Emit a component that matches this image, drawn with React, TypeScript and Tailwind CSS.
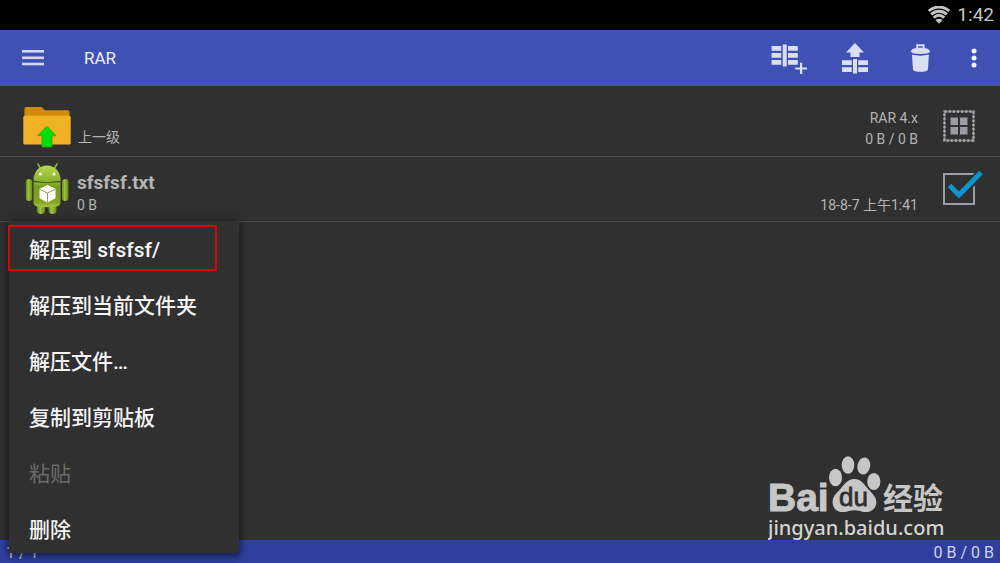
import { useState } from "react";

type MenuEntry = {
  label: string;
  disabled?: boolean;
};

const menuEntries: MenuEntry[] = [
  { label: "解压到 sfsfsf/" },
  { label: "解压到当前文件夹" },
  { label: "解压文件…" },
  { label: "复制到剪贴板" },
  { label: "粘贴", disabled: true },
  { label: "删除" },
];

function WifiIcon() {
  return (
    <svg width="24" height="18" viewBox="0 0 24 18" fill="none" stroke="#c4c4c4">
      <path d="M1.800 5C7.500 -.2 16.500 -.2 22.200 5" strokeWidth="3" />
      <path d="M4.200 8.300C8.800 4.200 15.200 4.200 19.800 8.300" strokeWidth="3" />
      <path d="M6.800 11.600C10 8.700 14 8.700 17.200 11.600" strokeWidth="3" />
      <path d="M12 17.800L8.400 13.900C10.600 12.200 13.400 12.200 15.600 13.900Z" fill="#c4c4c4" stroke="none" />
    </svg>
  );
}

function MenuIcon() {
  return (
    <svg width="22" height="18" viewBox="0 0 22 18" fill="#d5d9f0">
      <rect y="1" width="22" height="2.600" />
      <rect y="7.500" width="22" height="2.600" />
      <rect y="13.700" width="22" height="2.600" />
    </svg>
  );
}

function AddArchiveIcon() {
  return (
    <svg width="36" height="32" viewBox="0 0 36 32" fill="#dadef2">
      <path d="M.6 4h9.600v4.800H.6zM.6 11h9.600v4.800H.6zM.6 18h9.600v4.800H.6z" />
      <path d="M17 4h9.800v4.800H17zM17 11h9.800v4.800H17zM17 18h9.800v4.800H17z" />
      <path d="M11.700 2.500h4v22h-4z" />
      <path d="M29 20.800h2.200v4.700H36v2h-4.800v4.500H29v-4.500h-4.800v-2H29z" />
    </svg>
  );
}

function ExtractIcon() {
  return (
    <svg width="32" height="32" viewBox="0 0 32 32" fill="#dadef2">
      <path d="M16 1l9 9.500h-4.500V15h-9v-4.500H7z" />
      <path d="M3 18.300h9.800V23H3zM3 25.300h9.800V30H3z" />
      <path d="M19.200 18.300H29V23h-9.800zM19.200 25.300H29V30h-9.800z" />
      <path d="M14 17h4v14.500h-4z" />
    </svg>
  );
}

function TrashIcon() {
  return (
    <svg width="36" height="32" viewBox="0 0 36 32" fill="#dadef2">
      <path d="M13.200 7V2.300h8.400V7h-1.900V4.200h-4.600V7z" />
      <path d="M7.800 9.800C8.200 7 11.500 5.800 17.400 5.800S26.600 7 27 9.800C26 11.200 22.500 12 17.400 12S8.800 11.200 7.800 9.800z" />
      <path d="M9 12.600C14 14 20.800 14 25.900 12.600L25 27.200C24.500 29.200 21.500 29.700 17.400 29.700S10.300 29.200 9.900 27.200z" />
    </svg>
  );
}

function MoreIcon() {
  return (
    <svg width="6" height="32" viewBox="0 0 6 32" fill="#f5f6ff">
      <circle cx="3" cy="9" r="2.500" />
      <circle cx="3" cy="16" r="2.500" />
      <circle cx="3" cy="23" r="2.500" />
    </svg>
  );
}

function FolderUpIcon() {
  return (
    <svg width="48" height="42" viewBox="0 0 48 42">
      <path d="M1.500 12V2.500Q1.500 1 3 1H18.500L22 4.300H45Q46.500 4.300 46.500 6V12z" fill="#d08c06" />
      <rect x=".3" y="9.800" width="47.400" height="28.600" rx="1.500" fill="#f0b126" />
      <path
        d="M24 20.200L33 29.700H29V41H19V29.700H14.800z"
        fill="#00dd0c"
        stroke="#2fa300"
        strokeWidth=".8"
      />
    </svg>
  );
}

function AndroidIcon() {
  return (
    <svg width="44" height="52" viewBox="0 0 44 52">
      <defs>
        <linearGradient id="body" x1="0" y1="0" x2="0" y2="1">
          <stop offset="0" stopColor="#8fb52f" />
          <stop offset=".2" stopColor="#759a1e" />
          <stop offset=".8" stopColor="#82a527" />
          <stop offset="1" stopColor="#a4c842" />
        </linearGradient>
        <linearGradient id="head" x1="0" y1="0" x2="0" y2="1">
          <stop offset="0" stopColor="#b5d84f" />
          <stop offset="1" stopColor="#86b02b" />
        </linearGradient>
        <linearGradient id="limb" x1="0" y1="0" x2="1" y2="0">
          <stop offset="0" stopColor="#63821a" />
          <stop offset=".4" stopColor="#9dc43a" />
          <stop offset="1" stopColor="#6a8a1c" />
        </linearGradient>
      </defs>
      <path d="M13 1l3.500 6M32 1l-3.500 6" stroke="#96bb36" strokeWidth="1.500" strokeLinecap="round" />
      <rect x="12" y="38" width="8" height="13" rx="4" fill="url(#limb)" />
      <rect x="23.500" y="38" width="8" height="13" rx="4" fill="url(#limb)" />
      <rect x=".8" y="16" width="6.400" height="22" rx="3.200" fill="url(#limb)" />
      <rect x="37" y="16" width="6.400" height="22" rx="3.200" fill="url(#limb)" />
      <path d="M8.500 19h27V39q0 4-4 4.500-9 1.500-19 0-4-.5-4-4.500z" fill="url(#body)" />
      <path d="M8.500 17.800C8.500 9 14 2.500 22 2.500s13.700 6.500 13.700 15.300C28 19.500 16 19.500 8.500 17.800z" fill="url(#head)" />
      <path d="M8.500 18.800q13.500 1.600 27.200 0" stroke="#4d6515" strokeWidth="1" fill="none" />
      <circle cx="15.500" cy="11" r="1.500" fill="#fff" />
      <circle cx="29" cy="11" r="1.500" fill="#fff" />
      <path d="M22.500 22l8 3.800v9.400l-8 4.300-8-4.300v-9.400z" fill="#fff" />
      <path d="M14.500 26.200l8 3.800 8-3.800M22.500 30v9" stroke="#8da258" strokeWidth="1" fill="none" />
    </svg>
  );
}

function SelectAllIcon() {
  return (
    <svg width="32" height="32" viewBox="0 0 32 32">
      <rect x="1.500" y="1.500" width="29" height="29" fill="none" stroke="#77777b" strokeWidth="1.600" />
      <rect
        x="1.500"
        y="1.500"
        width="29"
        height="29"
        fill="none"
        stroke="#aaaab0"
        strokeWidth="2.400"
        strokeDasharray="2.200 1.940"
      />
      <path d="M7.500 7.500H15V15H7.500zM17 7.500h7.500V15H17zM7.500 17H15v7.500H7.500zM17 17h7.500v7.500H17z" fill="#9c9ca4" />
    </svg>
  );
}

function Watermark() {
  return (
    <svg width="182" height="89" viewBox="0 0 182 89" fill="#c6c6c6">
      <text x="0" y="60" fontFamily="Liberation Sans, sans-serif" fontWeight="700" fontSize="39" stroke="#c6c6c6">
        Bai
      </text>
      <ellipse cx="67.500" cy="26.500" rx="6.500" ry="8.700" />
      <ellipse cx="80" cy="14" rx="6.300" ry="8.700" />
      <ellipse cx="95.800" cy="15" rx="6.400" ry="8.700" transform="rotate(12 95.800 15)" />
      <ellipse cx="105.800" cy="30.500" rx="6.600" ry="8.600" />
      <path d="M86.500 28C94 28 96 34 101 39C106 44 109.500 48 108 54C105 62 97 62 92 60Q86.500 58.500 81 60C76 62 67 62 65 54C63.500 48 66 44 71.500 39C76 34 79 28 86.500 28z" />
      <text
        x="71"
        y="55"
        fontFamily="Liberation Sans, sans-serif"
        fontSize="26"
        fill="#303030"
        stroke="#303030"
        strokeWidth=".8"
      >
        du
      </text>
      <text
        x="115"
        y="58"
        fontFamily="Noto Sans CJK SC, sans-serif"
        fontWeight="700"
        fontSize="30"
      >
        经验
      </text>
      <text x="0" y="84" fontFamily="Noto Sans, sans-serif" fontWeight="500" fontSize="20" fill="#d4d4d4">
        jingyan.baidu.com
      </text>
    </svg>
  );
}

function ContextMenu() {
  return (
    <div
      role="menu"
      className="absolute left-[9px] top-full z-10 flex w-[230px] flex-col gap-2 rounded-[2px] bg-[#303030] pt-1 shadow-[0_2px_9px_1px_rgba(0,0,0,0.6)]"
    >
      {menuEntries.map((entry) => (
        <button
          key={entry.label}
          type="button"
          role="menuitem"
          disabled={entry.disabled}
          className="h-12 px-5 pt-1 text-left text-[21px] font-medium text-[#f4f4f4] disabled:font-normal disabled:text-[#6b6b6b]"
        >
          {entry.label}
        </button>
      ))}
      {/* highlight around the first entry */}
      <span className="pointer-events-none absolute -left-px top-1 h-[46px] w-[209px] border-2 border-[#d80808]" />
    </div>
  );
}

export default function App() {
  const [checked, setChecked] = useState(true);

  return (
    <div className="flex min-h-screen flex-col bg-[#303030] font-['Roboto','Noto_Sans_CJK_SC',sans-serif] text-[#b4b4b4]">
      <div className="flex h-[30px] items-center justify-end gap-1.5 bg-black px-1.5 text-[19px] text-[#c4c4c4]">
        <WifiIcon />
        <span>1:42</span>
      </div>

      <header className="flex h-14 items-center bg-[#4051b5] pl-[22px] pr-[23px]">
        <button type="button" aria-label="Menu">
          <MenuIcon />
        </button>
        <h1 className="ml-10 flex-1 pt-0.5 text-[17px] text-[#eef0fa]">RAR</h1>
        <div className="flex items-center gap-8">
          <button type="button" aria-label="Add to archive">
            <AddArchiveIcon />
          </button>
          <button type="button" aria-label="Extract">
            <ExtractIcon />
          </button>
          <button type="button" aria-label="Delete">
            <TrashIcon />
          </button>
          <button type="button" aria-label="More">
            <MoreIcon />
          </button>
        </div>
      </header>

      <main className="relative flex-1">
        <div className="flex h-[71px] items-center border-b border-[#4a4a4a] pl-[23px] pr-[25px] pt-3">
          <button type="button" className="flex items-end gap-[7px] text-[14px]">
            <FolderUpIcon />
            <span>上一级</span>
          </button>
          <div className="ml-auto pt-1 text-right text-[14px] leading-[21px]">
            <p>RAR 4.x</p>
            <p>0 B / 0 B</p>
          </div>
          <button type="button" aria-label="Select all" className="ml-[25px] pb-0.5">
            <SelectAllIcon />
          </button>
        </div>

        <div className="relative flex h-[65px] items-center border-b border-[#4a4a4a] pl-[25px] pr-[25px]">
          <AndroidIcon />
          <div className="ml-2 pt-2">
            <p className="text-[19px] font-bold leading-6">sfsfsf.txt</p>
            <p className="text-[14px] leading-5">0 B</p>
          </div>
          <p className="ml-auto mt-8 text-[14px] leading-5">18-8-7 上午1:41</p>
          <label className="relative ml-[25px] block size-8">
            <input
              type="checkbox"
              aria-label="sfsfsf.txt"
              checked={checked}
              onChange={(e) => setChecked(e.target.checked)}
              className="block size-8 appearance-none border-2 border-[#9c9ca4]"
            />
            {checked && (
              <svg
                width="42"
                height="34"
                viewBox="0 0 42 34"
                fill="none"
                className="pointer-events-none absolute left-0 -top-0.5"
              >
                <path d="M8 16l8 8L38 2" stroke="#303030" strokeWidth="9" />
                <path d="M6.500 14.500l9.500 9.500L38 1.500" stroke="#0a96cc" strokeWidth="5" />
              </svg>
            )}
          </label>
          <ContextMenu />
        </div>

        <div className="pointer-events-none absolute bottom-0 right-[50px]">
          <Watermark />
        </div>
      </main>

      <footer className="flex h-[23px] items-center justify-between bg-[#303f9f] px-1.5 pt-0.5 text-[16px] text-[#d0d3e8]">
        <span>1 / 1</span>
        <span>0 B / 0 B</span>
      </footer>
    </div>
  );
}
